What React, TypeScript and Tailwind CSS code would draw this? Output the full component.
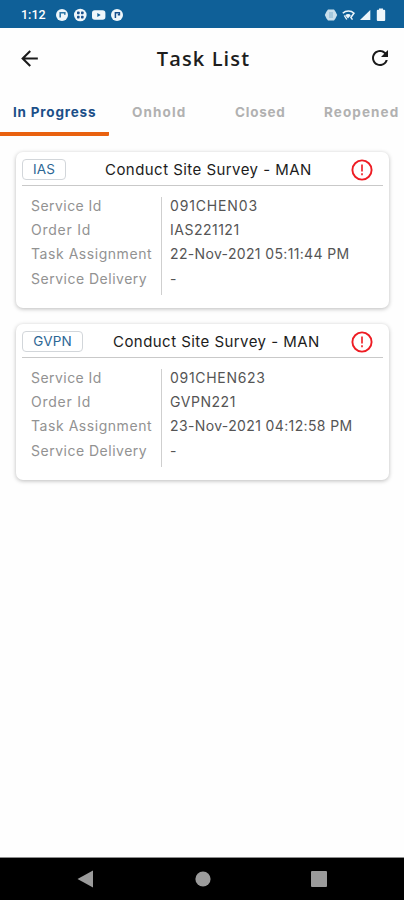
import { MdArrowBack, MdRefresh } from "react-icons/md";

type Task = {
  type: string;
  badgeClass: string;
  titleClass: string;
  rows: { label: string; labelClass: string; value: string; valueClass: string }[];
};

const tasks: Task[] = [
  {
    type: "IAS",
    badgeClass: "w-[44px]",
    titleClass: "ml-[39px]",
    rows: [
      { label: "Service Id", labelClass: "tracking-[0.45px]", value: "091CHEN03", valueClass: "tracking-[0.85px]" },
      { label: "Order Id", labelClass: "tracking-[0.75px]", value: "IAS221121", valueClass: "tracking-[0.5px]" },
      { label: "Task Assignment", labelClass: "tracking-[0.55px]", value: "22-Nov-2021 05:11:44 PM", valueClass: "tracking-[0.35px]" },
      { label: "Service Delivery", labelClass: "tracking-[0.5px]", value: "-", valueClass: "" },
    ],
  },
  {
    type: "GVPN",
    badgeClass: "w-[61px]",
    titleClass: "ml-[30px]",
    rows: [
      { label: "Service Id", labelClass: "tracking-[0.45px]", value: "091CHEN623", valueClass: "tracking-[0.7px]" },
      { label: "Order Id", labelClass: "tracking-[0.75px]", value: "GVPN221", valueClass: "tracking-[0.55px]" },
      { label: "Task Assignment", labelClass: "tracking-[0.55px]", value: "23-Nov-2021 04:12:58 PM", valueClass: "tracking-[0.37px]" },
      { label: "Service Delivery", labelClass: "tracking-[0.5px]", value: "-", valueClass: "" },
    ],
  },
];

function StatusBar() {
  return (
    <div className="flex h-[28px] items-center bg-[#0f6098] pl-[21px] pr-[18px] pt-[2px] text-white">
      <span className="w-[35px] font-['Roboto'] text-[12.5px] font-medium leading-none">1:12</span>
      <svg width="68" height="14" viewBox="0 0 68 14" fill="#eef6fb">
        <circle cx="6" cy="7" r="6" />
        <path d="M4.2 9.5V4.8h4.6v2" fill="none" stroke="#2f78a8" strokeWidth="1.6" />
        <circle cx="24.3" cy="7" r="6.3" />
        <g fill="#174f8c">
          <rect x="21" y="3.6" width="2.6" height="2.6" rx=".7" />
          <rect x="25" y="3.6" width="2.6" height="2.6" rx=".7" />
          <rect x="21" y="7.8" width="2.6" height="2.6" rx=".7" />
          <rect x="25" y="7.8" width="2.6" height="2.6" rx=".7" />
        </g>
        <rect x="36" y="2.2" width="13.4" height="9.6" rx="2.8" />
        <path d="M41.3 5v4l3.4-2z" fill="#0f6098" />
        <circle cx="61" cy="7" r="6" />
        <path d="M59.4 10V4.8h4v2h-1.6" fill="none" stroke="#174f8c" strokeWidth="1.5" />
      </svg>
      <svg className="ml-auto" width="62" height="14" viewBox="0 0 62 14" fill="#eef6fb">
        <path d="M4 1.5h6l1.6 2.3L13.2 7l-1.6 3.2L10 12.500H4l-1.600-2.300L.8 7l1.600-3.200z" fill="#c9dfec" />
        <path d="M5 5h4M5 7h4M5 9h4" stroke="#6fa5c8" strokeWidth=".8" />
        <path d="M18.8 5.2c3-3 8.2-3 11.2 0l-3 4" fill="none" stroke="#eef6fb" strokeWidth="1.6" />
        <path d="M21.200 7.200c1.800-1.500 4.200-1.500 5.600 0L24 10.500z" />
        <path d="M20.300 7.500l2.500 4M26.500 9l2 2.700" stroke="#eef6fb" strokeWidth="1.4" />
        <path d="M46.3 2v10H36z" />
        <path d="M55 1.7V.5h4v1.200h1.200a1 1 0 0 1 1 1V12a1 1 0 0 1-1 1h-6.400a1 1 0 0 1-1-1V2.700a1 1 0 0 1 1-1z" />
      </svg>
    </div>
  );
}

function AlertIcon() {
  return (
    <svg className="ml-auto mr-[10px] shrink-0" width="22" height="22" viewBox="0 0 22 22" fill="none" stroke="#ee1c23">
      <circle cx="11" cy="11" r="9.6" strokeWidth="1.9" />
      <path d="M11 5.5v7M11 14.2v2" strokeWidth="2" stroke="#f2474d" />
    </svg>
  );
}

function TaskCard({ task }: { task: Task }) {
  return (
    <article className="h-[156px] rounded-[7px] bg-white px-[6px] shadow-[0_1px_4px_rgba(0,0,0,0.27)]">
      <div className="flex h-[34px] items-center border-b border-[#c9c9c9] pt-[2px]">
        <span
          className={`flex h-[21px] shrink-0 items-center justify-center rounded-[4px] border border-[#d2d6da] text-[13.5px] tracking-[0.2px] text-[#2c6694] ${task.badgeClass}`}
        >
          {task.type}
        </span>
        <h2 className={`whitespace-nowrap pt-px text-[15px] tracking-[0.45px] text-[#1c1c1c] ${task.titleClass}`}>
          Conduct Site Survey - MAN
        </h2>
        <AlertIcon />
      </div>
      <div className="flex pl-[9px] pt-[8px]">
        <dl className="relative whitespace-nowrap text-[14px] leading-[24.2px]">
          {task.rows.map((row) => (
            <div key={row.label} className="flex h-[24.2px]">
              <dt className={`w-[139px] shrink-0 text-[#929292] ${row.labelClass}`}>{row.label}</dt>
              <dd className={`text-[#555] ${row.valueClass}`}>{row.value}</dd>
            </div>
          ))}
          <div className="absolute left-[130px] top-[3px] h-[98px] w-px bg-[#cfcfcf]" />
        </dl>
      </div>
    </article>
  );
}

export default function App() {
  return (
    <div className="flex h-[900px] w-[404px] flex-col overflow-hidden bg-[#fefefe] font-['Inter',sans-serif]">
      <StatusBar />
      <header className="flex h-[60px] items-center justify-between pl-[17px] pr-[12px]">
        <MdArrowBack size={25} color="#1b1b1b" />
        <h1 className="pr-[3px] pt-[2px] font-['Open_Sans'] text-[20px] font-semibold tracking-[1.1px] text-[#1d1d1d]">Task List</h1>
        <MdRefresh size={24} color="#1b1b1b" />
      </header>
      <nav className="flex h-[48px] whitespace-nowrap text-[13.5px] font-bold leading-[49px] text-[#b1b1b1]">
        <div className="w-[109px] shrink-0 rounded-r-[1px] border-b-4 border-[#e9610f] pl-[13px] tracking-[0.8px] text-[#1b4f88]">
          In Progress
        </div>
        <div className="w-[126px] shrink-0 pl-[23px] tracking-[1.1px]">Onhold</div>
        <div className="w-[89px] shrink-0 tracking-[0.75px]">Closed</div>
        <div className="tracking-[1.1px]">Reopened</div>
      </nav>
      <main className="flex flex-1 flex-col gap-4 pl-[16px] pr-[15px] pt-[16px]">
        {tasks.map((task) => (
          <TaskCard key={task.type} task={task} />
        ))}
      </main>
      <footer className="h-[43px] border-t border-[#8d8d8d] bg-black">
        <svg width="404" height="42" viewBox="0 0 404 42" fill="#9b9b9b">
          <path d="M77.5 21L93 12.5v17z" />
          <circle cx="203" cy="21" r="7.6" />
          <rect x="311" y="13" width="16" height="16" rx="1" />
        </svg>
      </footer>
    </div>
  );
}
